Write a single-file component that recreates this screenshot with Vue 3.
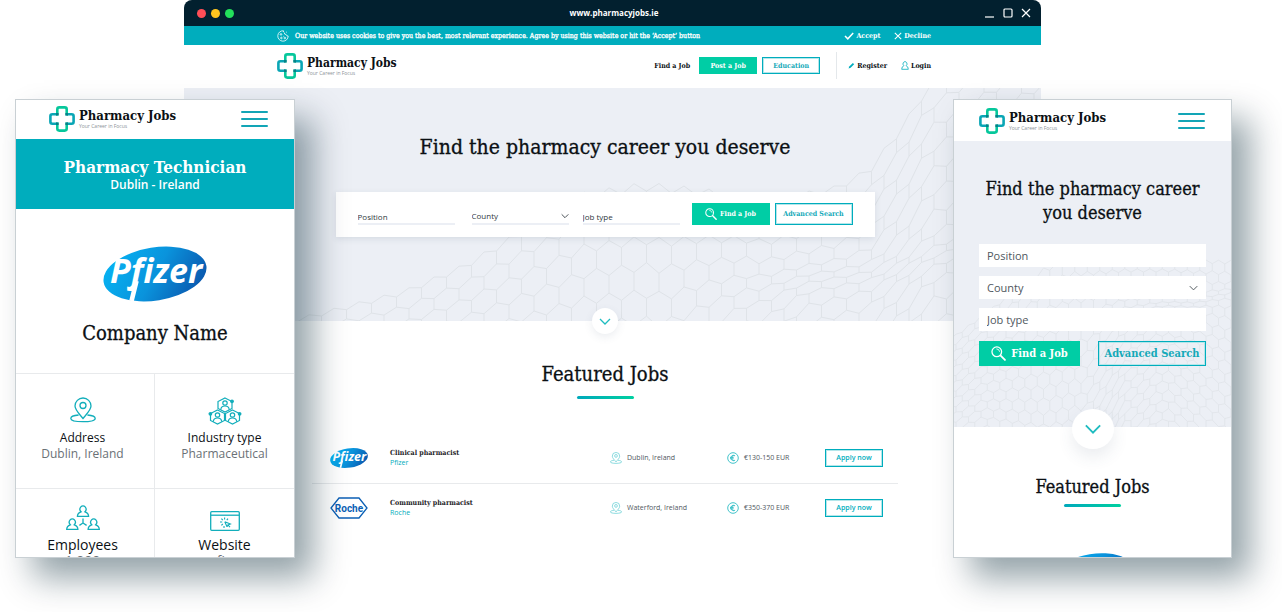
<script setup>
import { h } from 'vue'

const PfizerLogo = () =>
  h('svg', { viewBox: '0 0 104 58', role: 'img', 'aria-label': 'Pfizer' }, [
    h('ellipse', { cx: 52, cy: 29, rx: 52, ry: 26.5, transform: 'rotate(-9 52 29)', fill: 'url(#g-pfizer)' }),
    h('path', { d: 'M33.5 36L28.5 56', stroke: '#fff', 'stroke-width': 4.6, fill: 'none' }),
    h('text', { x: 7, y: 38, 'font-family': "'Open Sans', 'Noto Sans', sans-serif", 'font-size': 34, 'font-weight': 700, 'font-style': 'italic', fill: '#fff' }, 'Pfizer'),
  ])

const RocheLogo = () =>
  h('svg', { viewBox: '0 0 38 22', role: 'img', 'aria-label': 'Roche' }, [
    h('path', { d: 'M9 1H29L37 11L29 21H9L1 11Z', fill: '#fff', stroke: '#0b5fb5', 'stroke-width': 1.3 }),
    h('text', { x: 19, y: 15, 'text-anchor': 'middle', 'font-family': 'Roboto, sans-serif', 'font-size': 10, 'font-weight': 700, fill: '#0b5fb5' }, 'Roche'),
  ])

const jobs = [
  { title: 'Clinical pharmacist', company: 'Pfizer', logo: PfizerLogo, place: 'Dublin, Ireland', pay: '€130-150 EUR' },
  { title: 'Community pharmacist', company: 'Roche', logo: RocheLogo, place: 'Waterford, Ireland', pay: '€350-370 EUR' },
]

const facts = [
  { icon: 'pin', label: 'Address', value: 'Dublin, Ireland' },
  { icon: 'industry', label: 'Industry type', value: 'Pharmaceutical' },
  { icon: 'people', label: 'Employees', value: '1,000', big: true },
  { icon: 'browser', label: 'Website', value: 'www.pfizer.com', big: true },
]

/* Linear interpolation through a list of [x, y] stops. */
function along(stops, x) {
  if (x <= stops[0][0]) return stops[0][1]
  for (let i = 1; i < stops.length; i++) {
    const [x1, y1] = stops[i]
    if (x <= x1) {
      const [x0, y0] = stops[i - 1]
      return y0 + ((y1 - y0) * (x - x0)) / (x1 - x0)
    }
  }
  return stops[stops.length - 1][1]
}

const rowHeight = [[90, 12], [280, 17], [400, 26], [480, 27], [560, 20], [650, 19], [760, 22], [860, 24]]
const trough = [[540, 200], [640, 188], [700, 184], [780, 158], [860, 120]]

/* A hexagon mesh draped over a wavy surface, as one SVG path. */
function mesh(ridge, bottom) {
  const cell = 25
  const point = (x, row) => {
    let y = along(ridge, x)
    const steps = Math.round(row * 6)
    for (let i = 0; i < steps; i++) {
      const dip = x > 500 ? Math.min(1, (x - 500) / 120) : 0
      const d = (y - along(trough, x)) / 22
      y += (along(rowHeight, x) * (1 - 0.6 * dip * Math.exp(-d * d))) / 6
    }
    return [x, y]
  }
  let d = ''
  const seg = (a, b) => {
    if (a[1] > bottom && b[1] > bottom) return
    d += `M${a[0].toFixed(1)} ${a[1].toFixed(1)}L${b[0].toFixed(1)} ${b[1].toFixed(1)}`
  }
  for (let r = 0; r < 36; r++) {
    for (let c = 0; c < 36; c++) {
      const x = c * cell + (r % 2 ? cell / 2 : 0)
      const top = point(x, r)
      const right = point(x + cell / 2, r + 1 / 3)
      const left = point(x - cell / 2, r + 1 / 3)
      seg(left, top)
      seg(top, right)
      seg(right, point(x + cell / 2, r + 1))
    }
  }
  return d
}

const wideMesh = mesh([[90, 236], [220, 202], [280, 176], [340, 140], [400, 104], [460, 94], [520, 100], [580, 112], [650, 98], [685, 80], [720, 34], [745, -6], [860, -80]], 240)
const tallMesh = mesh([[90, 300], [220, 250], [280, 206], [340, 160], [400, 114], [460, 94], [860, 100]], 440)
</script>

<template>
  <svg class="sprite" width="0" height="0" aria-hidden="true">
    <defs>
      <linearGradient id="g-pfizer" x1="0" x2="1" y1="0.3" y2="0.7"><stop offset="0" stop-color="#06b2f2" /><stop offset="0.5" stop-color="#0a93dc" /><stop offset="1" stop-color="#0a56ad" /></linearGradient>
    </defs>
    <symbol id="logo" viewBox="0 0 26 26">
      <g fill="none" stroke-width="2.6" stroke-linejoin="round">
        <path d="M8.3 8.3H3.4Q1.4 8.3 1.4 10.3V15.7Q1.4 17.7 3.4 17.7H8.3M17.7 8.3H22.6Q24.6 8.3 24.6 10.3V15.7Q24.6 17.7 22.6 17.7H17.7" stroke="#0aa6b5" />
        <path d="M8.3 9.5V3.4Q8.3 1.4 10.3 1.4H15.7Q17.7 1.4 17.7 3.4V9.5M8.3 16.5V22.6Q8.3 24.6 10.3 24.6H15.7Q17.7 24.6 17.7 22.6V16.5" stroke="#06c79b" />
      </g>
      <path d="M7 7H9.6V9.6H7ZM16.4 7H19V9.6H16.4ZM7 16.4H9.6V19H7ZM16.4 16.4H19V19H16.4Z" fill="#077f88" />
    </symbol>
    <symbol id="pin" viewBox="0 0 26 26">
      <g fill="none" stroke="currentColor" stroke-width="1.3">
        <path d="M13 21.5C9 16.5 5 12.8 5 9A8 8 0 0 1 21 9C21 12.8 17 16.5 13 21.5Z" />
        <circle cx="13" cy="8.5" r="3" />
        <path d="M8.6 18C3.8 18.4 .8 19.8 .8 21.4C.8 23.4 6 24.6 13 24.6S25.2 23.4 25.2 21.4C25.2 19.8 22.2 18.4 17.4 18" />
      </g>
    </symbol>
    <symbol id="industry" viewBox="0 0 34 28">
      <g fill="none" stroke="currentColor" stroke-width="1.2">
        <path d="M17 1L24 4.5V11.5L17 15L10 11.5V4.5Z" /><circle cx="17" cy="6" r="2.2" /><path d="M12.8 12.6C13 9.8 14.6 9 17 9S21 9.8 21.2 12.6" />
        <path d="M9.5 13L16.5 16.5V23.5L9.5 27L2.5 23.5V16.5Z" /><circle cx="9.5" cy="18" r="2.2" /><path d="M5.3 24.6C5.5 21.8 7.1 21 9.5 21S13.5 21.8 13.7 24.6" />
        <path d="M24.5 13L31.5 16.5V23.5L24.5 27L17.5 23.5V16.5Z" /><circle cx="24.5" cy="18" r="2.2" /><path d="M20.3 24.6C20.5 21.8 22.1 21 24.5 21S28.5 21.8 28.7 24.6" />
      </g>
      <g fill="currentColor"><circle cx="24" cy="4.3" r="1.9" /><circle cx="2.4" cy="16.8" r="1.9" /><circle cx="31.6" cy="16.8" r="1.9" /></g>
    </symbol>
    <symbol id="people" viewBox="0 0 34 26">
      <g fill="none" stroke="currentColor" stroke-width="1.3">
        <path d="M15 6.8A3 3.4 0 1 1 19 6.8Q22.6 8 22.6 11.4H11.4Q11.4 8 15 6.8Z" />
        <path d="M4.3 19.8A3 3.4 0 1 1 8.3 19.8Q11.9 21 11.9 24.4H.7Q.7 21 4.3 19.8Z" />
        <path d="M25.7 19.8A3 3.4 0 1 1 29.7 19.8Q33.3 21 33.3 24.4H22.1Q22.1 21 25.7 19.8Z" />
        <path d="M17 13.5V18L13.4 20.4M17 18L20.6 20.4" />
      </g>
    </symbol>
    <symbol id="browser" viewBox="0 0 30 20">
      <g fill="none" stroke="currentColor" stroke-width="1.3">
        <rect x=".7" y=".7" width="28.6" height="18.6" rx="1" /><path d="M1 4.2H29" />
        <path d="M14.8 10.8L20.4 13L18 14L20 16.2M17 15.8L14.8 10.8M17 15.8L18 14M14.6 6.5V8.6M11.4 7.6L12.8 9.2M18 7.6L16.8 9.2M10 11H12.2M11.4 14.4L12.8 13M14 15V17" stroke-width="1.1" />
      </g>
    </symbol>
    <symbol id="euro" viewBox="0 0 12 12">
      <g fill="none" stroke="currentColor"><circle cx="6" cy="6" r="5.3" /><path d="M8 3.9A2.5 2.5 0 1 0 8 8.1M3 5.4H6.6M3 6.8H6.6" stroke-width="1.1" /></g>
    </symbol>
    <symbol id="cookie" viewBox="0 0 12 12">
      <g fill="none" stroke="currentColor" stroke-width=".8"><path d="M6.5 .8A5.2 5.2 0 1 0 11.2 6Q9.5 6.3 9.2 4.6Q7 4.4 7.4 2.8Q6.2 2.2 6.5 .8Z" /><circle cx="4" cy="4.4" r=".8" /><circle cx="4.4" cy="8" r=".8" /><circle cx="7.8" cy="8" r=".8" /><path d="M9 1.8L9.8 2.4M6 6L6.6 6.4" /></g>
    </symbol>
    <symbol id="search" viewBox="0 0 14 14">
      <g fill="none" stroke="currentColor" stroke-linecap="round"><circle cx="5.4" cy="5.4" r="4.5" stroke-width="1.2" /><path d="M5.4 2.7A2.7 2.7 0 0 1 8 5" stroke-width=".8" /><path d="M9 9L13 13" stroke-width="1.7" /></g>
    </symbol>
    <symbol id="chevron" viewBox="0 0 12 7">
      <path d="M1 1L6 6L11 1" fill="none" stroke="currentColor" stroke-width="1.3" />
    </symbol>
    <symbol id="check" viewBox="0 0 10 8"><path d="M1 4L3.8 6.8L9.2 1" fill="none" stroke="currentColor" stroke-width="1.5" /></symbol>
    <symbol id="cross" viewBox="0 0 10 10"><path d="M1 1L9 9M9 1L1 9" fill="none" stroke="currentColor" stroke-width="1.3" /></symbol>
    <symbol id="pencil" viewBox="0 0 8 8"><path d="M.6 7.4L1.4 5L5.6 1.2L7 2.6L3 6.6Z" fill="currentColor" /></symbol>
    <symbol id="user" viewBox="0 0 8 9"><path d="M3 4.6A2 2.1 0 1 1 5 4.6Q7.3 5.4 7.3 8.3H.7Q.7 5.4 3 4.6Z" fill="none" stroke="currentColor" stroke-width=".8" /></symbol>
  </svg>

  <main class="stage">
    <section class="window" aria-label="Desktop site">
      <div class="titlebar">
        <span class="dots"><i class="dot red"></i><i class="dot yellow"></i><i class="dot green"></i></span>
        <span class="address">www.pharmacyjobs.ie</span>
        <span class="controls">
          <button type="button" aria-label="Minimise"><svg viewBox="0 0 10 10"><path d="M0 9H9" /></svg></button>
          <button type="button" aria-label="Maximise"><svg viewBox="0 0 10 10"><rect x="1" y="1" width="8" height="8" rx="1" /></svg></button>
          <button type="button" aria-label="Close"><svg viewBox="0 0 10 10"><path d="M1 1L9 9M9 1L1 9" /></svg></button>
        </span>
      </div>

      <div class="cookies">
        <svg class="cookie"><use href="#cookie" /></svg>
        <p>Our website uses cookies to give you the best, most relevant experience. Agree by using this website or hit the ‘Accept’ button</p>
        <button type="button"><svg class="check"><use href="#check" /></svg>Accept</button>
        <button type="button"><svg class="cross"><use href="#cross" /></svg>Decline</button>
      </div>

      <header class="nav">
        <a class="brand" href="#"><svg><use href="#logo" /></svg><span><b>Pharmacy Jobs</b><small>Your Career in Focus</small></span></a>
        <nav>
          <a href="#">Find a Job</a>
          <a class="pill solid" href="#">Post a Job</a>
          <a class="pill outline" href="#">Education</a>
          <span class="account">
            <a href="#"><svg class="pencil"><use href="#pencil" /></svg>Register</a>
            <a href="#"><svg class="user"><use href="#user" /></svg>Login</a>
          </span>
        </nav>
      </header>

      <div class="hero">
        <svg class="mesh" viewBox="0 0 857 233" preserveAspectRatio="xMidYMid slice" aria-hidden="true"><path :d="wideMesh" /></svg>
        <h1>Find the pharmacy career you deserve</h1>
        <form class="search" @submit.prevent>
          <input type="text" placeholder="Position" aria-label="Position" />
          <span class="select">
            <select aria-label="County"><option>County</option></select>
            <svg><use href="#chevron" /></svg>
          </span>
          <input type="text" placeholder="Job type" aria-label="Job type" />
          <button class="pill solid" type="submit"><svg><use href="#search" /></svg>Find a Job</button>
          <button class="pill outline" type="button">Advanced Search</button>
        </form>
        <button class="down" type="button" aria-label="Scroll down"><svg><use href="#chevron" /></svg></button>
      </div>

      <div class="featured">
        <h2>Featured Jobs</h2>
        <table>
          <tbody>
            <tr v-for="job in jobs" :key="job.title">
              <td class="c-logo"><component :is="job.logo" class="mark" /></td>
              <td class="c-title"><strong>{{ job.title }}</strong><a href="#">{{ job.company }}</a></td>
              <td class="c-place"><span><svg><use href="#pin" /></svg>{{ job.place }}</span></td>
              <td class="c-pay"><span><svg><use href="#euro" /></svg>{{ job.pay }}</span></td>
              <td class="c-apply"><button type="button">Apply now</button></td>
            </tr>
          </tbody>
        </table>
      </div>
    </section>

    <section class="phone left" aria-label="Company page">
      <header class="bar">
        <a class="brand" href="#"><svg><use href="#logo" /></svg><span><b>Pharmacy Jobs</b><small>Your Career in Focus</small></span></a>
        <button class="menu" type="button" aria-label="Menu"><i></i><i></i><i></i></button>
      </header>
      <div class="role">
        <h2>Pharmacy Technician</h2>
        <p>Dublin - Ireland</p>
      </div>
      <div class="company">
        <PfizerLogo class="mark" />
        <h1>Company Name</h1>
      </div>
      <dl class="facts">
        <div v-for="fact in facts" :key="fact.label" :class="{ big: fact.big }">
          <svg :class="fact.icon" aria-hidden="true"><use :href="'#' + fact.icon" /></svg>
          <dt>{{ fact.label }}</dt>
          <dd>{{ fact.value }}</dd>
        </div>
      </dl>
    </section>

    <section class="phone right" aria-label="Search page">
      <header class="bar">
        <a class="brand" href="#"><svg><use href="#logo" /></svg><span><b>Pharmacy Jobs</b><small>Your Career in Focus</small></span></a>
        <button class="menu" type="button" aria-label="Menu"><i></i><i></i><i></i></button>
      </header>
      <div class="mhero">
        <svg class="mesh" viewBox="220 -140 556 572" preserveAspectRatio="xMidYMax slice" aria-hidden="true"><path :d="tallMesh" /></svg>
        <h1>Find the pharmacy career you deserve</h1>
        <form @submit.prevent>
          <input type="text" placeholder="Position" aria-label="Position" />
          <span class="select">
            <select aria-label="County"><option>County</option></select>
            <svg><use href="#chevron" /></svg>
          </span>
          <input type="text" placeholder="Job type" aria-label="Job type" />
          <div class="actions">
            <button class="solid" type="submit"><svg><use href="#search" /></svg>Find a Job</button>
            <button class="outline" type="button">Advanced Search</button>
          </div>
        </form>
        <button class="down" type="button" aria-label="Scroll down"><svg><use href="#chevron" /></svg></button>
      </div>
      <div class="mfeatured">
        <h2>Featured Jobs</h2>
        <PfizerLogo class="mark" />
      </div>
    </section>
  </main>
</template>

<style>
html, body { background: #fff; }
body { margin: 0; overflow: hidden; }
</style>

<style scoped>
* { box-sizing: border-box; }
.sprite { position: absolute; }
h1, h2, p, dl, dd { margin: 0; }
a { color: inherit; text-decoration: none; }
button, input, select { font: inherit; color: inherit; margin: 0; padding: 0; border: 0; background: none; border-radius: 0; }
button { cursor: pointer; }
svg { display: block; flex: none; }

.stage {
  --slab: "DejaVu Serif Condensed", "DejaVu Serif", serif;
  --sans: "Open Sans", "Noto Sans", sans-serif;
  --teal: #00adbd;
  --green: #00cda5;
  --ink: #0b1014;
  --mist: #eceff5;
  display: grid;
  grid-template-columns: 15fr 169fr 111fr 658fr 88fr 191fr 50fr;
  align-items: start;
  min-height: 612px;
  font-family: var(--sans);
  color: var(--ink);
}
h1, h2, b, strong { font-family: var(--slab); }
h1, h2 { font-weight: 400; -webkit-text-stroke: 0.3px currentColor; }

/* Desktop window */
.window { grid-column: 3 / 6; grid-row: 1; min-width: 0; border-radius: 8px 8px 0 0; overflow: hidden; background: #fff; }
.titlebar { display: grid; grid-template-columns: 1fr auto 1fr; align-items: center; height: 26px; padding: 0 10px 0 13px; background: #02202f; color: #fff; }
.dots { display: flex; gap: 5px; }
.dot { width: 9px; height: 9px; border-radius: 50%; }
.red { background: #ff4e57; }
.yellow { background: #ffc61f; }
.green { background: #23e05b; }
.address { font: 700 8px/12px var(--sans); }
.controls { display: flex; gap: 8px; justify-content: flex-end; }
.controls svg { width: 10px; height: 10px; fill: none; stroke: #fff; stroke-width: 1.2; }

.cookies { display: flex; align-items: center; height: 19px; padding: 0 110px 0 93px; background: var(--teal); color: #fff; font: 700 7px/10px var(--slab); white-space: nowrap; }
.cookies p { flex: 1; margin-left: 6px; min-width: 0; font-weight: 400; -webkit-text-stroke: 0.3px currentColor; }
.cookies button { display: flex; align-items: center; gap: 2px; margin-left: 14px; }
.cookie { width: 12px; height: 12px; }
.check { width: 10px; height: 8px; }
.cross { width: 8px; height: 8px; }

.nav { display: flex; align-items: center; justify-content: space-between; height: 43px; padding: 0 110px 2px 93px; }
.brand { display: flex; align-items: center; gap: 4px; }
.brand svg { width: 26px; height: 26px; }
.brand span { display: grid; }
.brand b { font-size: 12px; line-height: 14px; white-space: nowrap; }
.brand small { font-size: 5px; line-height: 6px; color: #8b9297; }
.nav nav { display: flex; align-items: center; font: 700 7px/10px var(--slab); white-space: nowrap; }
.nav nav > .solid { margin-left: 9px; }
.nav nav > .outline { margin-left: 5px; }
.pill { display: flex; align-items: center; justify-content: center; font: 700 7px/10px var(--slab); white-space: nowrap; }
.nav .pill { width: 58px; height: 17px; }
.solid { background: var(--green); color: #fff; }
.outline { border: 1px solid var(--teal); box-shadow: inset 0 0 0 1px #b4e6ea; color: #14a9b8; }
.account { display: flex; align-items: center; gap: 14px; height: 27px; margin-left: 16px; padding-left: 11px; border-left: 1px solid #e4e8eb; }
.account a { display: flex; align-items: center; gap: 2px; }
.account svg { color: var(--teal); }
.pencil { width: 7px; height: 7px; }
.user { width: 8px; height: 9px; }

.hero { position: relative; display: flex; flex-direction: column; align-items: center; padding: 44px 96px 84px 81px; background: var(--mist); }
.mesh { position: absolute; inset: 0; width: 100%; height: 100%; fill: none; stroke: #dfe3e8; stroke-width: 1; }
.hero h1 { position: relative; font-size: 21px; line-height: 30px; white-space: nowrap; }
.search { position: relative; display: flex; align-items: flex-end; width: 100%; max-width: 539px; height: 45px; margin-top: 30px; padding: 0 22px 12px; background: #fff; box-shadow: 0 2px 6px rgba(60, 80, 110, 0.12); font: 400 8px/14px var(--sans); color: #30383e; }
.search > input, .search .select { flex: 1; min-width: 0; height: 16px; border-bottom: 2px solid var(--mist); }
.search .select { display: flex; align-items: center; margin: 0 14px 0 17px; }
select { flex: 1; min-width: 0; height: 100%; appearance: none; }
input::placeholder { color: inherit; opacity: 1; }
.search .select svg { width: 8px; height: 6px; }
.search .pill { height: 22px; width: 78px; gap: 3px; }
.search .pill svg { width: 12px; height: 12px; }
.search .solid { margin-left: 12px; }
.search .outline { margin-left: 5px; }
.down { position: absolute; display: grid; place-items: center; color: #1fbcc0; background: #fff; border-radius: 50%; box-shadow: 0 3px 8px rgba(60, 80, 110, 0.1); }
.hero .down { left: 49%; bottom: -13px; width: 26px; height: 26px; margin-left: -12px; }
.down svg { width: 12px; height: 7px; }

.featured { padding: 39px 143px 0 128px; }
h2::after { content: ""; display: block; width: 57px; height: 3px; margin: 8px auto 0; border-radius: 2px; background: linear-gradient(90deg, #00a9bb, #00d0a0); }
.featured h2 { font-size: 20px; line-height: 28px; text-align: center; }
table { width: 100%; margin-top: 34px; border-collapse: collapse; table-layout: fixed; }
td { padding: 0; height: 50px; vertical-align: middle; font: 400 7px/10px var(--sans); color: #50585e; white-space: nowrap; }
tr + tr td { border-top: 1px solid #e8eaec; }
td span { display: flex; align-items: center; gap: 5px; }
td span svg { width: 12px; height: 12px; color: #45c4cb; }
.c-logo { width: 78px; padding-left: 18px; }
.c-logo .mark { width: 38px; height: 22px; }
.c-title strong { display: block; font-size: 7px; color: #1c2226; }
.c-title a { color: var(--teal); }
.c-place { width: 117px; }
.c-pay { width: 98px; }
.c-apply { width: 73px; }
.c-apply button { width: 58px; height: 18px; border: 1px solid var(--teal); box-shadow: inset 0 0 0 1px #b4e6ea; color: var(--teal); font-weight: 600; }

/* Phones */
.phone { grid-row: 1; position: relative; min-width: 0; height: 459px; margin-top: 99px; overflow: hidden; background: #fff; border: 1px solid #c9d0d4; box-shadow: 18px 20px 32px rgba(2, 36, 50, 0.42); }
.left { grid-column: 2 / 4; }
.right { grid-column: 5 / 7; }
.bar { display: flex; align-items: center; justify-content: space-between; height: 39px; padding: 0 26px 2px 33px; }
.right .bar { height: 41px; padding: 0 26px 0 25px; }
.bar .brand b { font-size: 13px; }
.menu { display: grid; gap: 5px; width: 27px; }
.menu i { height: 2px; border-radius: 1px; background: #12a5b6; }

.role { height: 70px; padding-top: 16px; background: var(--teal); color: #fff; text-align: center; }
.role h2 { font-size: 17px; line-height: 24px; font-weight: 700; -webkit-text-stroke: 0; }
.role h2::after { display: none; }
.role p { font-size: 12px; line-height: 12px; font-weight: 600; }
.company { display: grid; justify-items: center; align-content: start; height: 164px; padding-top: 36px; }
.company .mark { width: 104px; height: 58px; }
.company h1 { margin-top: 16px; font-size: 20px; line-height: 28px; }
.facts { display: grid; grid-template-columns: 1fr 1fr; border-top: 1px solid #e8eaec; }
.facts div { display: flex; flex-direction: column; align-items: center; height: 115px; padding-top: 23px; border-bottom: 1px solid #e8eaec; font-size: 12px; line-height: 16px; }
.facts div:nth-child(odd) { padding-right: 5px; border-right: 1px solid #e8eaec; }
.facts svg { color: #12aebb; width: 26px; height: 26px; margin-bottom: 7px; }
.facts svg.industry { width: 34px; height: 28px; margin-bottom: 5px; }
.facts svg.people { width: 34px; height: 26px; }
.facts svg.browser { width: 30px; height: 20px; margin: 6px 0; }
.facts dd { color: #6a7176; }
.facts .big { padding-top: 16px; font-size: 14px; line-height: 16px; }
.facts .big svg { margin-bottom: 6px; }

.mhero { position: relative; height: 286px; padding: 36px 25px 0; background: var(--mist); }
.mhero h1 { position: relative; font-size: 18px; line-height: 24px; text-align: center; }
.mhero .mesh { stroke-width: 1.6; }
.mhero form { position: relative; display: grid; gap: 9px; margin-top: 19px; font: 400 11px/14px var(--sans); color: #50585e; }
.mhero form > input, .mhero .select { width: 100%; min-width: 0; height: 23px; padding: 0 8px; background: #fff; }
.mhero .select { display: flex; align-items: center; }
.mhero .select svg { width: 9px; height: 6px; }
.actions { display: grid; grid-template-columns: 101fr 108fr; gap: 18px; margin-top: 1px; }
.actions button { display: flex; align-items: center; justify-content: center; gap: 5px; height: 25px; font: 700 11px/14px var(--slab); white-space: nowrap; }
.actions svg { width: 15px; height: 15px; }
.mhero .down { left: 50%; bottom: -22px; width: 42px; height: 40px; margin-left: -21px; box-shadow: 0 8px 16px rgba(60, 80, 110, 0.1); }
.mhero .down svg { width: 18px; height: 10px; }
.mfeatured { display: grid; justify-items: center; padding-top: 48px; }
.mfeatured h2 { font-size: 18px; line-height: 24px; }
.mfeatured h2::after { margin-top: 5px; }
.mfeatured .mark { width: 84px; height: 46px; margin-top: 45px; }
</style>
